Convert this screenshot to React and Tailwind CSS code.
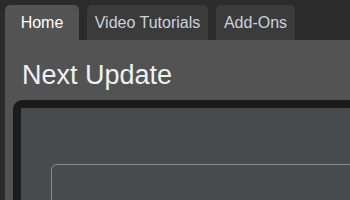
export default function App() {
  const tabs = [
    { label: 'Home', active: true, w: 'w-[74px]' },
    { label: 'Video Tutorials', w: 'w-[121px]' },
    { label: 'Add-Ons', w: 'w-[79px]' },
  ];

  return (
    <div
      className="w-[350px] h-[200px] overflow-hidden bg-[#2b2b2b] flex flex-col"
      style={{ fontFamily: '"Liberation Sans", Arial, sans-serif' }}
    >
      {/* Tab strip */}
      <div className="flex items-end gap-[8px] pl-[5px] pt-[5px] shrink-0">
        {tabs.map((t) =>
          t.active ? (
            <div
              key={t.label}
              className={`${t.w} h-[35px] flex items-center justify-center rounded-t-[5px] bg-[#535353] text-white text-[16px]`}
            >
              {t.label}
            </div>
          ) : (
            <div
              key={t.label}
              className={`${t.w} h-[35px] flex items-center justify-center rounded-t-[5px] bg-[#3b3b3b] text-[#c9d3dd] text-[16px] whitespace-nowrap`}
            >
              {t.label}
            </div>
          )
        )}
      </div>

      {/* Tab panel */}
      <div className="ml-[5px] flex-1 bg-[#535353] pt-[20px]">
        <h1 className="pl-[17px] h-[31px] leading-[31px] text-[27px] text-[#eef1f4] mb-[9px] whitespace-nowrap">
          Next Update
        </h1>
        <div className="ml-[8px] w-[400px] h-[200px] border-[8px] border-[#1c1b1c] rounded-[9px] bg-[#484a4b] pt-[56px] pl-[30px]">
          <div className="w-[400px] h-[100px] border border-[#8c8c8c] rounded-[6px]" />
        </div>
      </div>
    </div>
  );
}
